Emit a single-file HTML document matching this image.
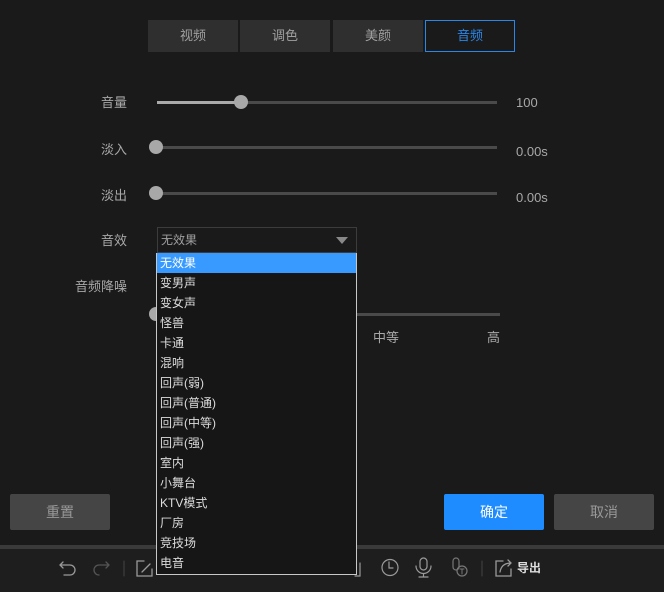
<!DOCTYPE html>
<html><head><meta charset="utf-8"><style>
*{margin:0;padding:0;box-sizing:border-box}
body{width:664px;height:592px;background:#1a1a1a;position:relative;overflow:hidden;font-family:"Liberation Sans","Noto Sans CJK SC",sans-serif;font-size:13px;color:#a8a8a8}
.a{position:absolute}
.tab{position:absolute;top:20px;height:32px;width:90px;background:#2f2f2f;color:#a0a0a0;text-align:center;line-height:32px;font-size:13px}
.lbl{position:absolute;right:537px;white-space:nowrap;line-height:16px}
.track{position:absolute;height:3px;background:#4a4a4a}
.knob{position:absolute;width:14px;height:14px;border-radius:50%;background:#a8a8a8}
.val{position:absolute;left:516px;line-height:16px}
.btn{position:absolute;top:494px;width:100px;height:36px;line-height:36px;text-align:center;background:#454545;color:#999;border-radius:2px;font-size:14px}
.list{position:absolute;left:156px;top:253px;width:201px;height:322px;background:#161616;border:1px solid #c8c8c8;border-top:none}
.list div{height:20px;line-height:20px;padding-left:3px;color:#ddd;font-size:12px}
svg{position:absolute}
</style></head><body>
<div class="tab" style="left:148px">视频</div>
<div class="tab" style="left:240px">调色</div>
<div class="tab" style="left:333px">美颜</div>
<div class="tab" style="left:425px;background:#1a1a1a;border:1px solid #2b86e8;color:#2b86e8;line-height:30px">音频</div>

<div class="lbl" style="top:95px">音量</div>
<div class="track" style="left:157px;top:101px;width:340px"></div>
<div class="track" style="left:157px;top:101px;width:84px;background:#aaa"></div>
<div class="knob" style="left:234px;top:95px"></div>
<div class="val" style="top:95px">100</div>

<div class="lbl" style="top:142px">淡入</div>
<div class="track" style="left:157px;top:146px;width:340px"></div>
<div class="knob" style="left:149px;top:140px"></div>
<div class="val" style="top:144px">0.00s</div>

<div class="lbl" style="top:188px">淡出</div>
<div class="track" style="left:157px;top:192px;width:340px"></div>
<div class="knob" style="left:149px;top:186px"></div>
<div class="val" style="top:190px">0.00s</div>

<div class="lbl" style="top:233px">音效</div>
<div class="a" style="left:157px;top:227px;width:200px;height:26px;border:1px solid #3c3c3c;background:#1a1a1a;padding-left:3px;line-height:24px;font-size:12px;color:#a0a0a0">无效果</div>
<div class="a" style="left:336px;top:237px;width:0;height:0;border-left:6px solid transparent;border-right:6px solid transparent;border-top:7px solid #888"></div>

<div class="lbl" style="top:279px">音频降噪</div>
<div class="track" style="left:157px;top:313px;width:343px"></div>
<div class="knob" style="left:149px;top:307px"></div>
<div class="a" style="left:373px;top:327px">中等</div>
<div class="a" style="left:487px;top:327px">高</div>

<div class="btn" style="left:10px">重置</div>
<div class="btn" style="left:444px;background:#1e8cff;color:#fff">确定</div>
<div class="btn" style="left:554px">取消</div>

<div class="a" style="left:0;top:545px;width:664px;height:4px;background:#3a3a3a"></div>
<div class="a" style="left:0;top:549px;width:664px;height:43px;background:#1e1e1e"></div>

<svg width="664" height="592" style="left:0;top:0" fill="none" stroke-linecap="round">
<path d="M63 562 l-3 3 3 3 M60 565 h10 a5 5 0 0 1 0 10 h-6" stroke="#9a9a9a" stroke-width="1.3"/>
<path d="M106 562 l3 3 -3 3 M109 565 h-10 a5 5 0 0 0 0 10" stroke="#555" stroke-width="1.3"/>
<path d="M124 561 v15" stroke="#444"/>
<path d="M144 561 h-7 v15 h15 v-7 M142 572 l8 -8" stroke="#9a9a9a" stroke-width="1.3"/>
<path d="M355 576 h5 v-13" stroke="#9a9a9a" stroke-width="1.2"/>
<circle cx="390" cy="567.5" r="8" stroke="#9a9a9a" stroke-width="1.2"/>
<path d="M389 562 v6 h4" stroke="#9a9a9a" stroke-width="1.2"/>
<rect x="420" y="558" width="7" height="12" rx="3.5" stroke="#9a9a9a" stroke-width="1.2"/>
<path d="M416 566 a7.5 7.5 0 0 0 15 0 M423.5 573.5 v3 M419 577 h9" stroke="#9a9a9a" stroke-width="1.2"/>
<rect x="453" y="558" width="6" height="12" rx="3" stroke="#777" stroke-width="1.2"/>
<circle cx="462" cy="571" r="5" stroke="#777" stroke-width="1.2"/>
<path d="M460 569 h4 M462 569 v5" stroke="#777"/>
<path d="M482 561 v15" stroke="#444"/>
<path d="M503 561 h-7 v15 h15 v-7 M500 572 c1 -6 5 -9 11 -9 M508 560 l3 3 -3 3" stroke="#9a9a9a" stroke-width="1.3"/>
</svg>
<div class="a" style="left:517px;top:559px;color:#ddd;font-size:12px;font-weight:bold">导出</div>

<div class="list">
<div style="background:#3899ff;color:#fff">无效果</div>
<div>变男声</div><div>变女声</div><div>怪兽</div><div>卡通</div><div>混响</div>
<div>回声(弱)</div><div>回声(普通)</div><div>回声(中等)</div><div>回声(强)</div>
<div>室内</div><div>小舞台</div><div>KTV模式</div><div>厂房</div><div>竞技场</div><div>电音</div>
</div>
</body></html>
